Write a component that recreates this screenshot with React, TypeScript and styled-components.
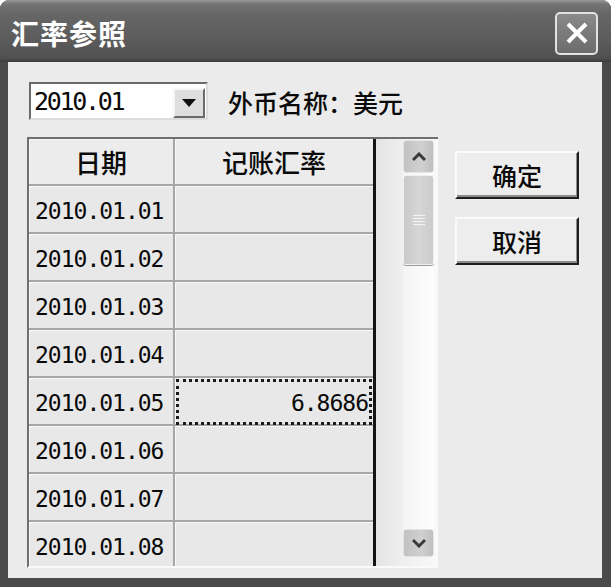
import styled, { createGlobalStyle } from 'styled-components'

const GlobalStyle = createGlobalStyle`
  html, body {
    margin: 0;
    padding: 0;
    background: #ffffff;
  }
  * {
    box-sizing: border-box;
  }
`

const CJK = `"Noto Sans CJK SC", "Noto Sans", sans-serif`
const MONO = `"DejaVu Sans Mono", "Liberation Mono", monospace`

const rates: { date: string; rate: string }[] = [
  { date: '2010.01.01', rate: '' },
  { date: '2010.01.02', rate: '' },
  { date: '2010.01.03', rate: '' },
  { date: '2010.01.04', rate: '' },
  { date: '2010.01.05', rate: '6.8686' },
  { date: '2010.01.06', rate: '' },
  { date: '2010.01.07', rate: '' },
  { date: '2010.01.08', rate: '' },
]

const Window = styled.div`
  width: 611px;
  height: 587px;
  display: flex;
  flex-direction: column;
  background: #4a4a4a;
  border-radius: 9px 9px 0 0;
  overflow: hidden;
`

const TitleBar = styled.div`
  height: 62px;
  flex-shrink: 0;
  display: flex;
  align-items: center;
  justify-content: space-between;
  padding: 0 13px 0 11px;
  background: linear-gradient(
    to bottom,
    #9a9a9a 0px,
    #747474 4px,
    #666666 14px,
    #5c5c5c 40px,
    #505050 58px,
    #3c3c3c 62px
  );
`

const Title = styled.div`
  font-family: ${CJK};
  font-weight: 700;
  font-size: 28px;
  letter-spacing: 1px;
  color: #ffffff;
  margin-top: 4px;
`

const CloseButton = styled.div`
  width: 43px;
  height: 43px;
  margin-top: 4px;
  border: 2px solid #e2e2e2;
  border-radius: 5px;
  background: linear-gradient(to bottom, #8a8a8a, #6c6c6c);
  display: flex;
  align-items: center;
  justify-content: center;
`

const Body = styled.div`
  flex: 1;
  margin: 0 9px 9px 8px;
  background: #ebebeb;
  padding: 20px 0 0 19px;
  display: flex;
  flex-direction: column;
  gap: 17px;
`

const TopRow = styled.div`
  display: flex;
  align-items: center;
  gap: 20px;
`

const Combo = styled.div`
  width: 179px;
  height: 38px;
  margin-left: 2px;
  border: 2px solid;
  border-color: #6a6a6a #dcdcdc #dcdcdc #6a6a6a;
  background: #ffffff;
  display: flex;
  align-items: center;
  justify-content: space-between;
  padding: 0 1px 0 3px;
`

const ComboText = styled.span`
  font-family: ${MONO};
  font-size: 25px;
  letter-spacing: -2.3px;
  color: #0a0a0a;
`

const ComboButton = styled.div`
  width: 32px;
  height: 30px;
  margin-top: 3px;
  background: #dedede;
  border: 2px solid;
  border-color: #f6f6f6 #6a6a6a #6a6a6a #f6f6f6;
  display: flex;
  align-items: center;
  justify-content: center;
`

const Label = styled.span`
  font-family: ${CJK};
  font-weight: 500;
  font-size: 25px;
  color: #0a0a0a;
  margin-top: 1px;
`

const MainRow = styled.div`
  display: flex;
  align-items: flex-start;
  gap: 17px;
`

const GridFrame = styled.div`
  width: 411px;
  height: 431px;
  border-left: 2px solid #6f6f6f;
  border-top: 2px solid #6f6f6f;
  border-bottom: 2px solid #fafafa;
  display: flex;
  overflow: hidden;
`

const Table = styled.div`
  display: grid;
  grid-template-columns: 146px 198px;
  grid-template-rows: 47px;
  grid-auto-rows: 48px;
  border-right: 3px solid #141414;
  align-self: stretch;
  align-content: start;
  background: #e8e8e8;
`

const Cell = styled.div<{ $first?: boolean; $header?: boolean; $focused?: boolean }>`
  display: flex;
  align-items: center;
  justify-content: ${(p) => (p.$header ? 'center' : p.$first ? 'flex-start' : 'flex-end')};
  padding: ${(p) => (p.$header ? '0' : p.$first ? '3px 0 0 6px' : '3px 5px 0 0')};
  background: ${(p) => (p.$header ? '#ececec' : '#e8e8e8')};
  border-bottom: 2px solid #a6a6a6;
  border-right: ${(p) => (p.$first ? '2px solid #a6a6a6' : 'none')};
  box-shadow: inset 1px 1px 0 #f7f7f7;
  font-family: ${(p) => (p.$header ? CJK : MONO)};
  font-weight: ${(p) => (p.$header ? 500 : 400)};
  font-size: ${(p) => (p.$header ? '26px' : '23px')};
  letter-spacing: ${(p) => (p.$header ? '0' : '-1px')};
  color: #0a0a0a;
  outline: ${(p) => (p.$focused ? '3px dotted #1a1a1a' : 'none')};
  outline-offset: -4px;
`

const Track = styled.div`
  flex: 1;
  display: flex;
  justify-content: flex-end;
  padding: 1px 4px 9px 0;
  background: linear-gradient(to right, #e4e4e4 0%, #eeeeee 40%, #f9f9f9 100%);
`

const ScrollBar = styled.div`
  width: 31px;
  display: flex;
  flex-direction: column;
  justify-content: space-between;
  background: linear-gradient(to right, #f4f4f4, #fdfdfd);
`

const ScrollTop = styled.div`
  display: flex;
  flex-direction: column;
  gap: 2px;
`

const ArrowButton = styled.div<{ $height: number }>`
  height: ${(p) => p.$height}px;
  border-radius: 3px;
  border: 1px solid #e4e4e4;
  background: linear-gradient(to right, #c2c2c2, #d0d0d0 60%, #bfbfbf);
  display: flex;
  align-items: center;
  justify-content: center;
`

const Thumb = styled.div`
  height: 90px;
  border-radius: 3px;
  border: 1px solid #f0f0f0;
  box-shadow: 0 1px 0 #9a9a9a;
  background: linear-gradient(to right, #c9c9c9, #d6d6d6 50%, #cbcbcb);
  display: flex;
  align-items: center;
  justify-content: center;
`

const Buttons = styled.div`
  display: flex;
  flex-direction: column;
  gap: 18px;
  padding-top: 14px;
`

const Button = styled.div`
  width: 124px;
  height: 48px;
  border: 2px solid;
  border-color: #fbfbfb #1e1e1e #1e1e1e #fbfbfb;
  box-shadow: inset -1px -2px 0 #8c8c8c;
  background: #ededed;
  display: flex;
  align-items: center;
  justify-content: center;
  font-family: ${CJK};
  font-weight: 500;
  font-size: 25px;
  color: #0a0a0a;
`

export default function App() {
  return (
    <>
      <GlobalStyle />
      <Window>
        <TitleBar>
          <Title>汇率参照</Title>
          <CloseButton>
            <svg width="24" height="24" viewBox="0 0 24 24">
              <path d="M3 3 L21 21 M21 3 L3 21" stroke="#ffffff" strokeWidth="4" />
            </svg>
          </CloseButton>
        </TitleBar>
        <Body>
          <TopRow>
            <Combo>
              <ComboText>2010.01</ComboText>
              <ComboButton>
                <svg width="14" height="8" viewBox="0 0 14 8">
                  <path d="M0 0 H14 L7 8 Z" fill="#111111" />
                </svg>
              </ComboButton>
            </Combo>
            <Label>外币名称：美元</Label>
          </TopRow>
          <MainRow>
            <GridFrame>
              <Table>
                <Cell $header $first>日期</Cell>
                <Cell $header>记账汇率</Cell>
                {rates.flatMap((r) => [
                  <Cell key={r.date} $first>
                    {r.date}
                  </Cell>,
                  <Cell key={r.date + '-rate'} $focused={r.rate !== ''}>
                    {r.rate}
                  </Cell>,
                ])}
              </Table>
              <Track>
                <ScrollBar>
                  <ScrollTop>
                    <ArrowButton $height={33}>
                      <svg width="14" height="10" viewBox="0 0 14 10">
                        <path d="M1 8 L7 2 L13 8" stroke="#3a3a3a" strokeWidth="3" fill="none" />
                      </svg>
                    </ArrowButton>
                    <Thumb>
                      <svg width="12" height="12" viewBox="0 0 12 12">
                        <path d="M0 1.5 H12 M0 4.5 H12 M0 7.5 H12 M0 10.5 H12" stroke="#f4f4f4" strokeWidth="1.2" />
                      </svg>
                    </Thumb>
                  </ScrollTop>
                  <ArrowButton $height={28}>
                    <svg width="14" height="10" viewBox="0 0 14 10">
                      <path d="M1 2 L7 8 L13 2" stroke="#3a3a3a" strokeWidth="3" fill="none" />
                    </svg>
                  </ArrowButton>
                </ScrollBar>
              </Track>
            </GridFrame>
            <Buttons>
              <Button>确定</Button>
              <Button>取消</Button>
            </Buttons>
          </MainRow>
        </Body>
      </Window>
    </>
  )
}
